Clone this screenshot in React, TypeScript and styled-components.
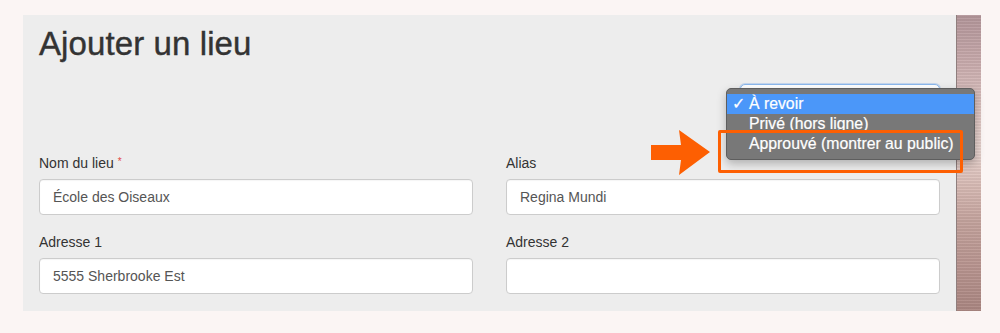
import React from "react";
import styled, { createGlobalStyle } from "styled-components";

const Global = createGlobalStyle`
  html, body { margin: 0; padding: 0; background: #fbf5f4; }
  body { font-family: "Liberation Sans", Arial, sans-serif; }
`;

const Page = styled.div`
  display: flex;
  padding: 15px 19px 22px 23px;
  height: 333px;
  box-sizing: border-box;
`;

const Panel = styled.div`
  flex: 1;
  background: #ededed;
  padding: 9px 16px 16px 16px;
  display: flex;
  flex-direction: column;
`;

const Strip = styled.div`
  width: 24px;
  border-left: 1px solid #8f7e7d;
  background:
    repeating-linear-gradient(180deg, rgba(255,255,255,0.06) 0 1px, rgba(0,0,0,0.05) 1px 3px),
    linear-gradient(180deg, #b3969a 0%, #c6a8aa 14%, #dfc6c3 32%, #ead6d1 46%, #d9bcb6 57%, #c4a39d 70%, #b8948f 86%, #ab8782 100%);
`;

const Title = styled.h1`
  margin: 0;
  font-size: 33px;
  line-height: 40px;
  font-weight: 400;
  color: #333;
  -webkit-text-stroke: 0.4px #333;
  letter-spacing: 0.1px;
`;

const StatusRow = styled.div`
  display: flex;
  justify-content: flex-end;
  margin-top: 20px;
`;

const SelectWrap = styled.div`
  position: relative;
  width: 200px;
  height: 34px;
`;

const SelectBox = styled.div`
  width: 100%;
  height: 100%;
  box-sizing: border-box;
  border: 1px solid #8bb8ec;
  border-radius: 5px;
  background: #fff;
  box-shadow: 0 0 0 1px rgba(120, 170, 235, 0.35);
`;

const Menu = styled.ul`
  position: absolute;
  left: -14px;
  top: 4px;
  width: 249px;
  box-sizing: border-box;
  margin: 0;
  padding: 5px 0;
  list-style: none;
  background: #787878;
  border: 1px solid #5e5e5e;
  border-radius: 5px;
  box-shadow: 0 4px 10px rgba(0, 0, 0, 0.25);
  z-index: 2;
`;

const MenuItem = styled.li<{ $active?: boolean }>`
  position: relative;
  height: 20px;
  line-height: 20px;
  padding-left: 22px;
  font-size: 15.8px;
  color: #fff;
  -webkit-text-stroke: 0.2px #fff;
  background: ${(p) => (p.$active ? "#4b97f9" : "transparent")};
  white-space: nowrap;
`;

const Check = styled.span`
  position: absolute;
  left: 5px;
  top: 0;
  font-size: 16px;
`;

const HighlightBox = styled.div`
  position: absolute;
  left: -22px;
  top: 46px;
  width: 245px;
  height: 43px;
  box-sizing: border-box;
  border: 3px solid #fd5f02;
  border-radius: 2px;
  z-index: 3;
`;

const Arrow = styled.svg`
  position: absolute;
  left: -89px;
  top: 46px;
  z-index: 3;
`;

const Grid = styled.div`
  display: grid;
  grid-template-columns: 1fr 1fr;
  column-gap: 33px;
  row-gap: 17px;
  margin-top: 35px;
`;

const Field = styled.div`
  display: flex;
  flex-direction: column;
`;

const Label = styled.label`
  display: block;
  height: 20px;
  font-size: 14px;
  line-height: 20px;
  color: #333;
  margin-bottom: 6px;
`;

const Required = styled.span`
  position: relative;
  top: -3px;
  color: #e2484a;
  font-size: 10px;
  margin-left: 4px;
`;

const Input = styled.div`
  height: 36px;
  box-sizing: border-box;
  border: 1px solid #cccccc;
  border-radius: 4px;
  background: #fff;
  padding: 0 13px;
  font-size: 14px;
  line-height: 34px;
  color: #555;
  box-shadow: inset 0 1px 1px rgba(0, 0, 0, 0.04);
`;

const fields = [
  { label: "Nom du lieu", required: true, value: "École des Oiseaux" },
  { label: "Alias", value: "Regina Mundi" },
  { label: "Adresse 1", value: "5555 Sherbrooke Est" },
  { label: "Adresse 2", value: "" },
];

export default function App() {
  return (
    <>
      <Global />
      <Page>
        <Panel>
          <Title>Ajouter un lieu</Title>
          <StatusRow>
            <SelectWrap>
              <SelectBox />
              <Menu>
                <MenuItem $active>
                  <Check>✓</Check>À revoir
                </MenuItem>
                <MenuItem>Privé (hors ligne)</MenuItem>
                <MenuItem>Approuvé (montrer au public)</MenuItem>
              </Menu>
              <HighlightBox />
              <Arrow width="60" height="46" viewBox="0 0 60 46">
                <polygon
                  points="0,15 30,15 28,0 59,22 28,45 30,30 0,30"
                  fill="#fd5f02"
                />
              </Arrow>
            </SelectWrap>
          </StatusRow>
          <Grid>
            {fields.map((f) => (
              <Field key={f.label}>
                <Label>
                  {f.label}
                  {f.required && <Required>*</Required>}
                </Label>
                <Input>{f.value}</Input>
              </Field>
            ))}
          </Grid>
        </Panel>
        <Strip />
      </Page>
    </>
  );
}
